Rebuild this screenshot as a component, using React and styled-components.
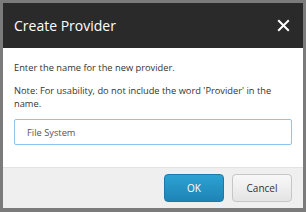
import React from 'react';
import styled, { createGlobalStyle } from 'styled-components';

const GlobalStyle = createGlobalStyle`
    html, body {
        margin: 0;
        padding: 0;
        background: #7b7b7b;
    }

    body {
        font-family: 'Open Sans', 'Noto Sans', sans-serif;
    }
`;

const Dialog = styled.div`
    width: 300px;
    height: 205px;
    margin: 3px 3px 4px 3px;
    display: flex;
    flex-direction: column;
    background: #fff;
`;

const Header = styled.div`
    height: 45px;
    background: #2a2a2a;
    display: flex;
    align-items: center;
    justify-content: space-between;
    padding: 0 13px 0 11px;
    color: #fff;

    h2 {
        margin: 0;
        font-size: 14px;
        font-weight: 400;
    }
`;

const CloseButton = styled.button`
    border: 0;
    background: none;
    padding: 0;
    color: #fff;
    display: flex;
    cursor: pointer;
`;

const Body = styled.div`
    flex: 1;
    padding: 13px 11px 0 11px;
    font-size: 9.3px;
    color: #333;

    p {
        margin: 0 0 10px 0;
        line-height: 13px;
    }

    p:last-of-type {
        margin-bottom: 0;
    }
`;

const Input = styled.input`
    display: block;
    box-sizing: border-box;
    width: 100%;
    height: 26px;
    margin-top: 9px;
    padding: 0 12px;
    border: 1px solid #8fc4ee;
    border-radius: 2px;
    font-family: inherit;
    font-size: 9.3px;
    color: #555;
    outline: none;
`;

const Footer = styled.div`
    height: 40px;
    background: #efefef;
    border-top: 1px solid #e3e3e3;
    display: flex;
    align-items: center;
    justify-content: flex-end;
    gap: 8px;
    padding: 0 11px;
`;

const Button = styled.button`
    width: 60px;
    height: 28px;
    border-radius: 4px;
    font-family: inherit;
    font-size: 10px;
    cursor: pointer;
    border: 1px solid ${({ primary }) => (primary ? '#1c79a8' : '#c6c6c6')};
    color: ${({ primary }) => (primary ? '#fff' : '#333')};
    background: ${({ primary }) =>
        primary
            ? 'linear-gradient(#2ba2d3, #1e84b5)'
            : 'linear-gradient(#f8f8f8, #e4e4e4)'};
`;

const App = () => {
    return (
        <>
            <GlobalStyle />
            <Dialog>
                <Header>
                    <h2>Create Provider</h2>
                    <CloseButton aria-label="Close">
                        <svg width="13" height="13" viewBox="0 0 13 13">
                            <path
                                d="M1.2 1.2 L11.8 11.8 M11.8 1.2 L1.2 11.8"
                                stroke="#fff"
                                strokeWidth="2"
                            />
                        </svg>
                    </CloseButton>
                </Header>
                <Body>
                    <p>Enter the name for the new provider.</p>
                    <p>
                        Note: For usability, do not include the word 'Provider' in the
                        name.
                    </p>
                    <Input defaultValue="File System" />
                </Body>
                <Footer>
                    <Button primary>OK</Button>
                    <Button>Cancel</Button>
                </Footer>
            </Dialog>
        </>
    );
};

export default App;
